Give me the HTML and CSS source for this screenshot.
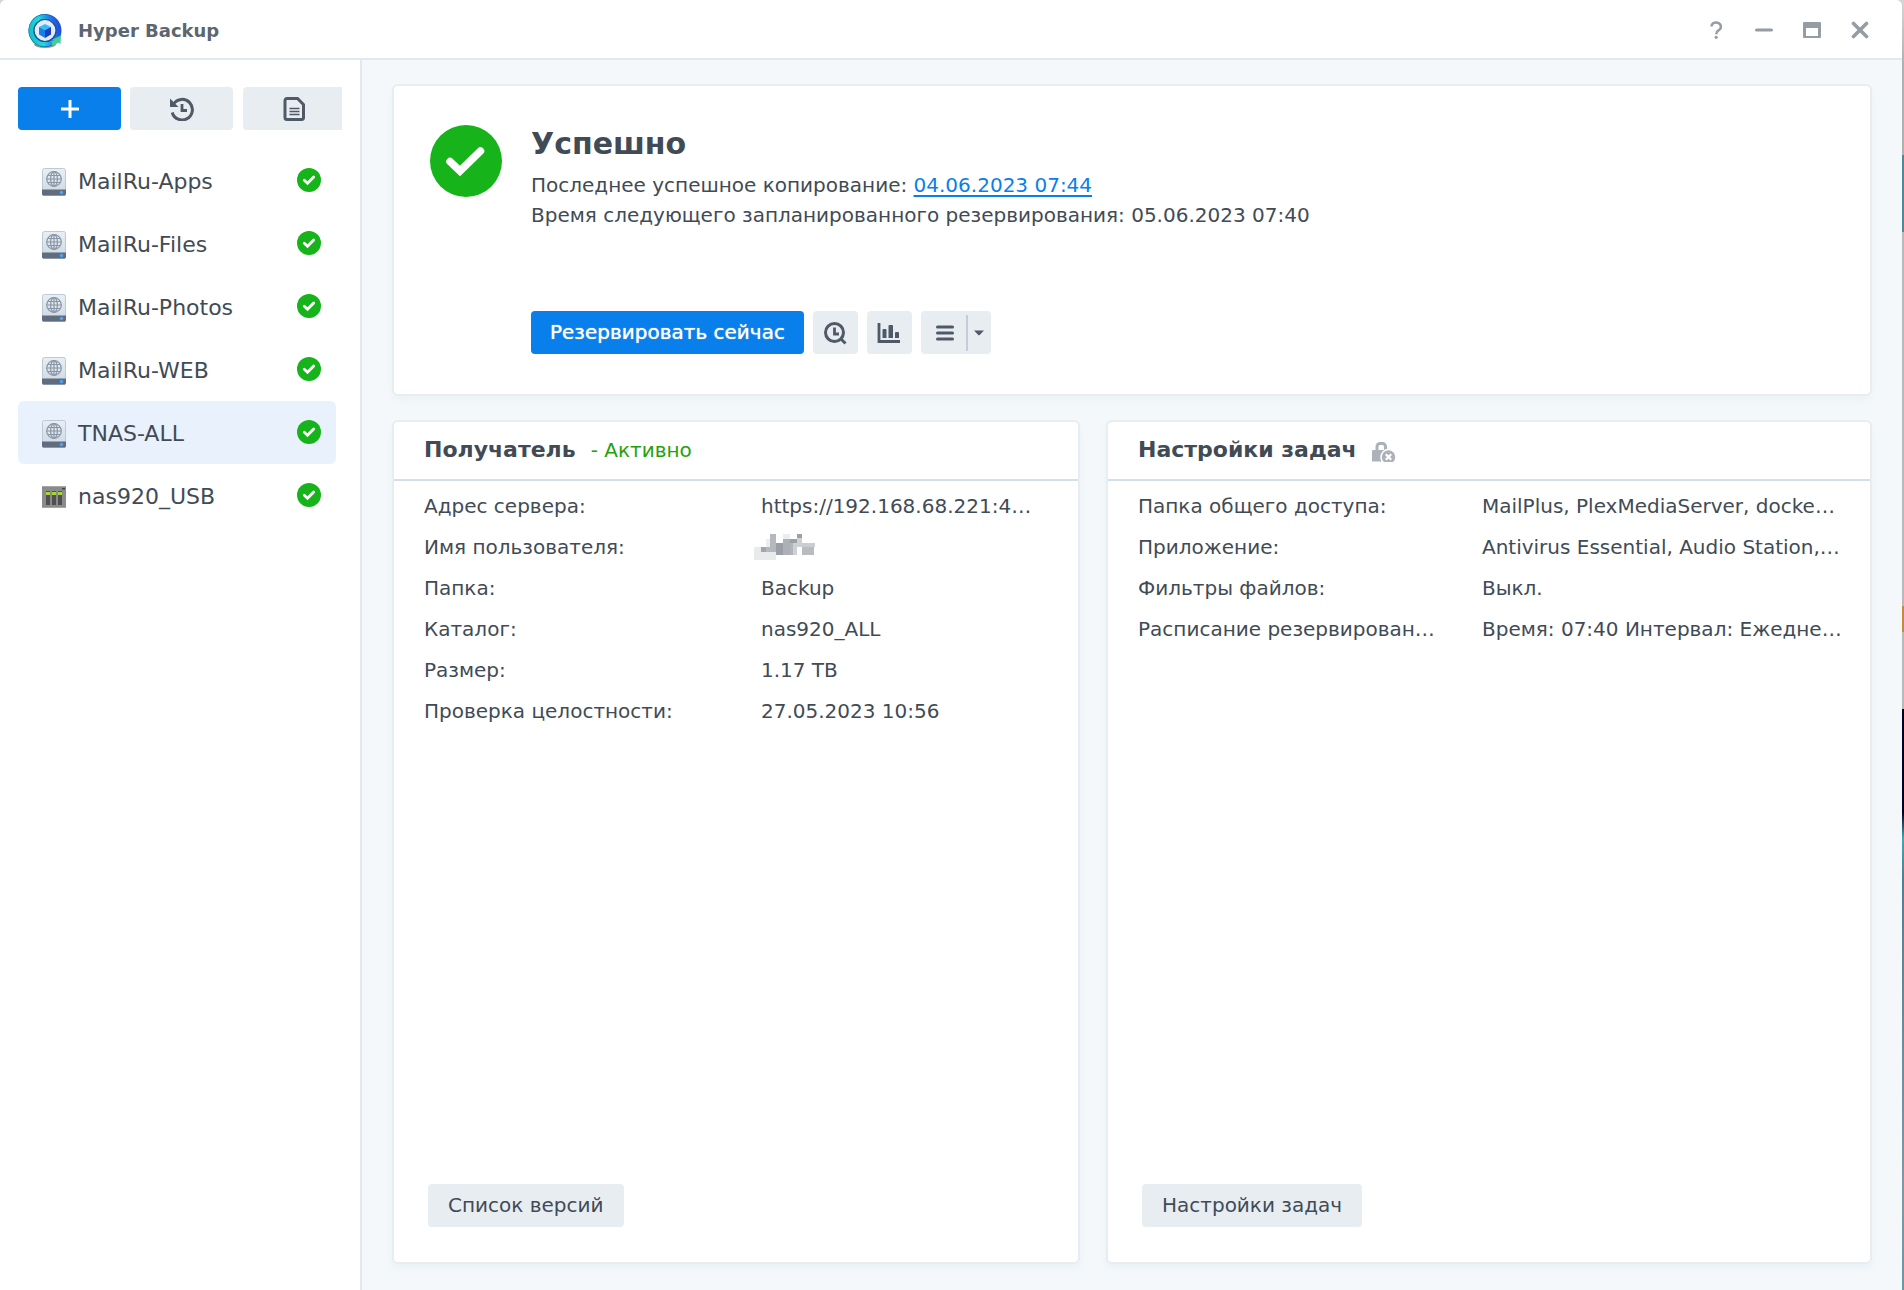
FILE: index.html
```html
<!DOCTYPE html>
<html lang="ru">
<head>
<meta charset="utf-8">
<title>Hyper Backup</title>
<link rel="stylesheet" href="styles.css">
</head>
<body>
<svg class="defs" aria-hidden="true">
  <defs>
    <linearGradient id="disk" x1="0" y1="0" x2="0" y2="1"><stop offset="0" stop-color="#e9eff4"/><stop offset="1" stop-color="#cdd8e2"/></linearGradient>
    <linearGradient id="ring" x1="0" y1=".6" x2="1" y2=".4"><stop offset="0" stop-color="#14c4c4"/><stop offset=".35" stop-color="#1fdcd8"/><stop offset=".7" stop-color="#1f86e6"/><stop offset="1" stop-color="#2450e0"/></linearGradient>
    <symbol id="ok" viewBox="0 0 72 72">
      <circle cx="36" cy="36" r="36" fill="#17b31a"/>
      <path d="M20 36.500l10 9.500L50.500 26" fill="none" stroke="#fff" stroke-width="7.500" stroke-linecap="round"/>
    </symbol>
    <symbol id="okSmall" viewBox="0 0 24 24">
      <circle cx="12" cy="12" r="12" fill="#17b31a"/>
      <path d="M7.300 12.300l3.200 2.900L16.700 9" fill="none" stroke="#fff" stroke-width="2.800" stroke-linecap="round"/>
    </symbol>
    <symbol id="drive" viewBox="0 0 24 28">
      <rect x=".5" y=".5" width="23" height="26" rx="2" fill="url(#disk)" stroke="#bccad6"/>
      <path d="M0 21.500h24V26a1.500 1.500 0 0 1-1.500 1.500h-21A1.500 1.500 0 0 1 0 26z" fill="#616d7e"/>
      <path d="M1 27.500h22" stroke="#8b98a7"/>
      <g fill="none" stroke="#8996a6" stroke-width="1.200"><circle cx="12" cy="11" r="7.300"/><ellipse cx="12" cy="11" rx="3.400" ry="7.300"/><path d="M12 3.700v14.600M4.700 11h14.600M6 7.500h12M6 14.500h12"/></g>
      <circle cx="19.500" cy="24.500" r="1.700" fill="#45a8ff"/>
    </symbol>
  </defs>
</svg>
<div class="window">
  <header class="titlebar">
    <svg class="logo" viewBox="0 0 36 36">
      <ellipse cx="18" cy="32.500" rx="11" ry="3.500" fill="#8f979b"/>
      <circle cx="18" cy="18.500" r="16.500" fill="#1a55c8"/>
      <path d="M18 2a16.500 16.500 0 0 0 0 33z" fill="#1283b8"/>
      <circle cx="18" cy="18.500" r="13.700" fill="none" stroke="url(#ring)" stroke-width="4.200"/>
      <circle cx="18" cy="18.500" r="11" fill="#e3edfa" stroke="#1b4fa8" stroke-width="1.200"/>
      <path d="M12 15l6-3 6 3-6 3z" fill="#37bdf6"/>
      <path d="M12 15l6 3v8l-6-3.500z" fill="#167fe8"/>
      <path d="M24 15l-6 3v8l6-3.500z" fill="#1a3fc4"/>
      <path d="M25.500 27.500L34 23.500l-.5 8.500-2.200-1.300a15 15 0 0 1-6.300 2.800l-.5-4.500 2.500-.5z" fill="#40cf97"/>
    </svg>
    <h1 class="app-name">Hyper Backup</h1>
    <div class="window-tools">
      <button class="tool" aria-label="Справка"><svg viewBox="0 0 18 20"><path d="M4.500 6.500a4.700 4.200 0 1 1 7 3.800c-1.700 1-2.300 1.700-2.300 4" fill="none" stroke="#959ca4" stroke-width="2.500"/><circle cx="9.200" cy="17.300" r="1.600" fill="#959ca4"/></svg></button>
      <button class="tool" aria-label="Свернуть"><svg viewBox="0 0 18 20"><path d="M1.500 10h15" stroke="#959ca4" stroke-width="3" stroke-linecap="round"/></svg></button>
      <button class="tool" aria-label="Развернуть"><svg viewBox="0 0 18 20"><path fill-rule="evenodd" d="M1 2h16a1 1 0 0 1 1 1v14a1 1 0 0 1-1 1H1a1 1 0 0 1-1-1V3a1 1 0 0 1 1-1zm2 6v8h12V8z" fill="#959ca4"/></svg></button>
      <button class="tool" aria-label="Закрыть"><svg viewBox="0 0 18 20"><path d="M2.500 3.500l13 13m0-13l-13 13" stroke="#959ca4" stroke-width="3.600" stroke-linecap="round"/></svg></button>
    </div>
  </header>
  <div class="body">
    <aside class="sidebar">
      <div class="actions">
        <button class="btn primary" aria-label="Создать"><svg class="icon" viewBox="0 0 24 24"><path d="M12 3v18M3 12h18" stroke="#fff" stroke-width="3"/></svg></button>
        <button class="btn" aria-label="Восстановить"><svg class="icon" viewBox="0 0 24 24"><path d="M3.500 7A10.300 10.300 0 1 1 2.200 15.500" fill="none" stroke="#4f5a66" stroke-width="3"/><path d="M0 1.500V10h8.500z" fill="#4f5a66"/><path d="M12 7v6.500h5" fill="none" stroke="#4f5a66" stroke-width="2.800"/></svg></button>
        <button class="btn last" aria-label="Журнал"><svg class="icon" viewBox="0 0 24 24"><path d="M4 1.500h10.500l6 6V20.500a2 2 0 0 1-2 2H4a2 2 0 0 1-2-2v-17a2 2 0 0 1 2-2z" fill="none" stroke="#4f5a66" stroke-width="3"/><path d="M6.500 11.500h10M6.500 14.500h10M6.500 17.500h10" stroke="#4f5a66" stroke-width="1.400"/></svg></button>
      </div>
      <ul class="tasks">
        <li class="task"><svg class="kind" viewBox="0 0 24 28"><use href="#drive"/></svg><span class="task-name">MailRu-Apps</span><svg class="state"><use href="#okSmall"/></svg></li>
        <li class="task"><svg class="kind" viewBox="0 0 24 28"><use href="#drive"/></svg><span class="task-name">MailRu-Files</span><svg class="state"><use href="#okSmall"/></svg></li>
        <li class="task"><svg class="kind" viewBox="0 0 24 28"><use href="#drive"/></svg><span class="task-name">MailRu-Photos</span><svg class="state"><use href="#okSmall"/></svg></li>
        <li class="task"><svg class="kind" viewBox="0 0 24 28"><use href="#drive"/></svg><span class="task-name">MailRu-WEB</span><svg class="state"><use href="#okSmall"/></svg></li>
        <li class="task selected"><svg class="kind" viewBox="0 0 24 28"><use href="#drive"/></svg><span class="task-name">TNAS-ALL</span><svg class="state"><use href="#okSmall"/></svg></li>
        <li class="task"><svg class="kind" viewBox="0 0 24 28"><path d="M0 3h24v22H0z" fill="#8b8b8b"/><path d="M0 3h24v1H0zM0 24h24v1H0z" fill="#a5a5a5"/><path d="M4 8h4v14H4zM10 8h4v14h-4zM16 8h4v14h-4z" fill="#505050"/><path d="M4 9h4v3H4zM10 9h4v3h-4zM16 9h4v3h-4z" fill="#a4d92e"/><path d="M20 5h3v1.500h-3z" fill="#444"/></svg><span class="task-name">nas920_USB</span><svg class="state"><use href="#okSmall"/></svg></li>
      </ul>
    </aside>
    <main class="content">
      <section class="card summary">
        <svg class="summary-state"><use href="#ok"/></svg>
        <div class="summary-info">
          <h2 class="summary-title">Успешно</h2>
          <p class="line">Последнее успешное копирование: <a class="link" href="#log">04.06.2023 07:44</a></p>
          <p class="line">Время следующего запланированного резервирования: 05.06.2023 07:40</p>
          <div class="toolbar">
            <button class="btn primary strong">Резервировать сейчас</button>
            <button class="btn square" aria-label="Обзор версий"><svg class="icon" viewBox="0 0 24 24"><circle cx="11.500" cy="11.500" r="9" fill="none" stroke="#4f5a66" stroke-width="3"/><path d="M17.500 17.500l5 5" stroke="#4f5a66" stroke-width="3"/><path d="M11.500 6.500v6.500h4.500" fill="none" stroke="#4f5a66" stroke-width="2.800"/></svg></button>
            <button class="btn square" aria-label="Статистика"><svg class="icon" viewBox="0 0 24 24"><path d="M2 2v18.500h21" fill="none" stroke="#4f5a66" stroke-width="2.800"/><path d="M5.500 9a1 1 0 0 1 1-1h2a1 1 0 0 1 1 1v8h-4zM11.500 5a1 1 0 0 1 1-1h2.500a1 1 0 0 1 1 1v12h-4.500zM18 12a1 1 0 0 1 1-1h2a1 1 0 0 1 1 1v5h-4z" fill="#4f5a66"/></svg></button>
            <button class="btn menu" aria-label="Меню"><svg class="icon" viewBox="0 0 24 24"><path d="M4.500 6h15M4.500 12h15M4.500 18h15" stroke="#4f5a66" stroke-width="3" stroke-linecap="round"/></svg><span class="divider"></span><svg class="caret" viewBox="0 0 10 6"><path d="M0 .5h10L5.700 5a1 1 0 0 1-1.400 0z" fill="#4f5a66"/></svg></button>
          </div>
        </div>
      </section>
      <div class="panels">
        <section class="card panel">
          <header class="panel-head"><h2 class="panel-title">Получатель</h2><span class="active">- Активно</span></header>
          <dl class="details target">
            <dt>Адрес сервера:</dt><dd>https://192.168.68.221:4…</dd>
            <dt>Имя пользователя:</dt><dd><svg class="masked" viewBox="0 0 62 26" shape-rendering="crispEdges"><path d="M0 13h22v13H0z" fill="#e9eaec"/><path d="M12 5h5v8h-5zM29 0h7v5h-7z" fill="#ecedef"/><path d="M7 13h5v5H7z" fill="#a2a5ab"/><path d="M12 13h4v5h-4z" fill="#b5b8bd"/><path d="M16 0h6v18h-6z" fill="#b5b8bd"/><path d="M22 9h7v12h-7z" fill="#9b9ea5"/><path d="M29 5h7v16h-7z" fill="#adb0b6"/><path d="M36 5h7v4h-7zM43 0h5v4h-5z" fill="#9da0a7"/><path d="M36 9h3v12h-3z" fill="#b1b4ba"/><path d="M39 9h4v12h-4zM43 4h5v9h-5z" fill="#ced1d4"/><path d="M48 9h13v4H48z" fill="#cbced1"/><path d="M48 13h12v8H48z" fill="#b8bbc0"/></svg></dd>
            <dt>Папка:</dt><dd>Backup</dd>
            <dt>Каталог:</dt><dd>nas920_ALL</dd>
            <dt>Размер:</dt><dd>1.17 TB</dd>
            <dt>Проверка целостности:</dt><dd>27.05.2023 10:56</dd>
          </dl>
          <footer class="panel-foot"><button class="btn">Список версий</button></footer>
        </section>
        <section class="card panel">
          <header class="panel-head"><h2 class="panel-title">Настройки задач</h2><svg class="lock" viewBox="0 0 24 20"><path d="M5 9V4.500A3 3 0 0 1 8 1.500h2.500a3 3 0 0 1 3 3V9" fill="none" stroke="#adb1b8" stroke-width="3"/><path d="M1 8h14v11.500H0V9a1 1 0 0 1 1-1z" fill="#adb1b8"/><circle cx="16.500" cy="15" r="7.500" fill="#adb1b8" stroke="#fff" stroke-width="1.500"/><path d="M13.800 12.300l5.400 5.400m0-5.400l-5.400 5.400" stroke="#fff" stroke-width="2.200"/></svg></header>
          <dl class="details settings">
            <dt>Папка общего доступа:</dt><dd>MailPlus, PlexMediaServer, docke…</dd>
            <dt>Приложение:</dt><dd>Antivirus Essential, Audio Station,…</dd>
            <dt>Фильтры файлов:</dt><dd>Выкл.</dd>
            <dt>Расписание резервирован…</dt><dd>Время: 07:40 Интервал: Ежедне…</dd>
          </dl>
          <footer class="panel-foot"><button class="btn">Настройки задач</button></footer>
        </section>
      </div>
    </main>
  </div>
</div>
</body>
</html>
```
FILE: styles.css
```css
* { box-sizing: border-box; }

body {
  margin: 0;
  padding-right: 2px;
  font: 20px/30px Verdana, "DejaVu Sans", sans-serif;
  color: #414b55;
  background: linear-gradient(#d5d6d8, #b0b0b1 5%, #b0b0b1 12%, #4a8a9c 12%, #4a8a9c 18%, #b9b9ba 18%, #b9b9ba 47%, #c88a35 47%, #c88a35 49%, #b9b9ba 49%, #b9b9ba 55%, #020227 55%, #020227 63%, #3ca9bb 65%, #4d8095 68%, #8097a8 92%, #639aa6);
}

h1, h2, p, ul, dl, dd { margin: 0; padding: 0; }
svg { display: block; flex: none; }
.defs { position: absolute; width: 0; height: 0; }

.window {
  display: flex;
  flex-direction: column;
  min-height: 100vh;
  background: #f4f8fb;
  border-radius: 6px 6px 0 0;
  overflow: hidden;
}

.titlebar {
  display: flex;
  align-items: center;
  height: 60px;
  padding: 2px 33px 0 27px;
  background: #fff;
  border-bottom: 2px solid #e1e8f0;
}
.logo { width: 36px; height: 36px; margin-right: 15px; }
.app-name { padding-top: 2px; font-size: 18px; line-height: 24px; color: #5c6670; }
.window-tools { display: flex; gap: 30px; margin-left: auto; }
.tool { width: 18px; height: 20px; padding: 0; border: 0; background: none; }
.tool svg { width: 18px; height: 20px; }

.body { display: flex; flex: 1; }

.sidebar {
  flex: none;
  width: 362px;
  padding: 27px 18px 0;
  background: #fff;
  border-right: 2px solid #e2e8f0;
}
.actions { display: flex; gap: 9px; }
.actions .btn { width: 103px; padding: 0; }
.actions .btn.last { width: 99px; padding-left: 4px; margin-left: 1px; border-radius: 4px 0 0 4px; }

.btn {
  display: flex;
  align-items: center;
  justify-content: center;
  height: 43px;
  padding: 0 20px 2px;
  border: 0;
  border-radius: 4px;
  background: #e8edf2;
  color: inherit;
  font: inherit;
  white-space: nowrap;
}
.btn.primary { background: #087feb; color: #fff; }
.btn.strong { padding: 0 19px 2px; text-shadow: 0 0 1px #fff; }
.btn.square { width: 45px; padding: 0; }
.icon { width: 24px; height: 24px; }

.tasks { margin: 19px 6px 0 0; list-style: none; }
.task {
  display: flex;
  align-items: center;
  height: 63px;
  padding: 0 15px 0 24px;
  border-radius: 6px;
  font-size: 22px;
}
.task.selected { background: #e9f1fd; }
.kind { width: 24px; height: 28px; margin-top: 2px; margin-right: 12px; }
.task-name { padding-top: 2px; }
.state { width: 24px; height: 24px; margin-bottom: 2px; margin-left: auto; }

.content {
  display: flex;
  flex-direction: column;
  flex: 1;
  gap: 24px;
  min-width: 0;
  padding: 24px 30px 26px;
}

.card {
  background: #fff;
  border: 2px solid #e8edf2;
  border-radius: 6px;
  box-shadow: 0 4px 6px rgba(190, 205, 215, .15);
}

.summary { display: flex; gap: 29px; height: 312px; padding: 39px 36px 0; }
.summary-state { width: 72px; height: 72px; }
.summary-info { padding-top: 1px; }
.summary-title { font-size: 30px; line-height: 36px; margin-bottom: 8px; }
.link { color: #087feb; text-underline-offset: 3px; }
.toolbar { display: flex; gap: 9px; margin-top: 81px; }
.btn.menu { padding: 0 7px 0 12px; }
.divider { width: 2px; height: 36px; margin: 0 6px 0 9px; background: #c4cedb; }
.caret { width: 10px; height: 6px; }

.panels { display: grid; grid-template-columns: 688fr 766fr; gap: 26px; flex: 1; }
.panel { display: flex; flex-direction: column; min-width: 0; }
.panel-head {
  display: flex;
  align-items: center;
  gap: 15px;
  height: 59px;
  padding: 0 30px 2px;
  border-bottom: 2px solid #d5dfe8;
}
.panel-title { font-size: 22px; line-height: 30px; }
.active { color: #1fa30a; }
.lock { width: 24px; height: 20px; margin-top: 4px; }

.details { display: grid; padding: 5px 30px; line-height: 41px; white-space: nowrap; }
.details.target { grid-template-columns: 54% 46%; }
.details.settings { grid-template-columns: 49% 51%; }
.details dd { height: 41px; }
.masked { width: 62px; height: 26px; margin: 7px 0 0 -7px; }

.panel-foot { display: flex; margin-top: auto; padding: 0 34px 35px; }
```
